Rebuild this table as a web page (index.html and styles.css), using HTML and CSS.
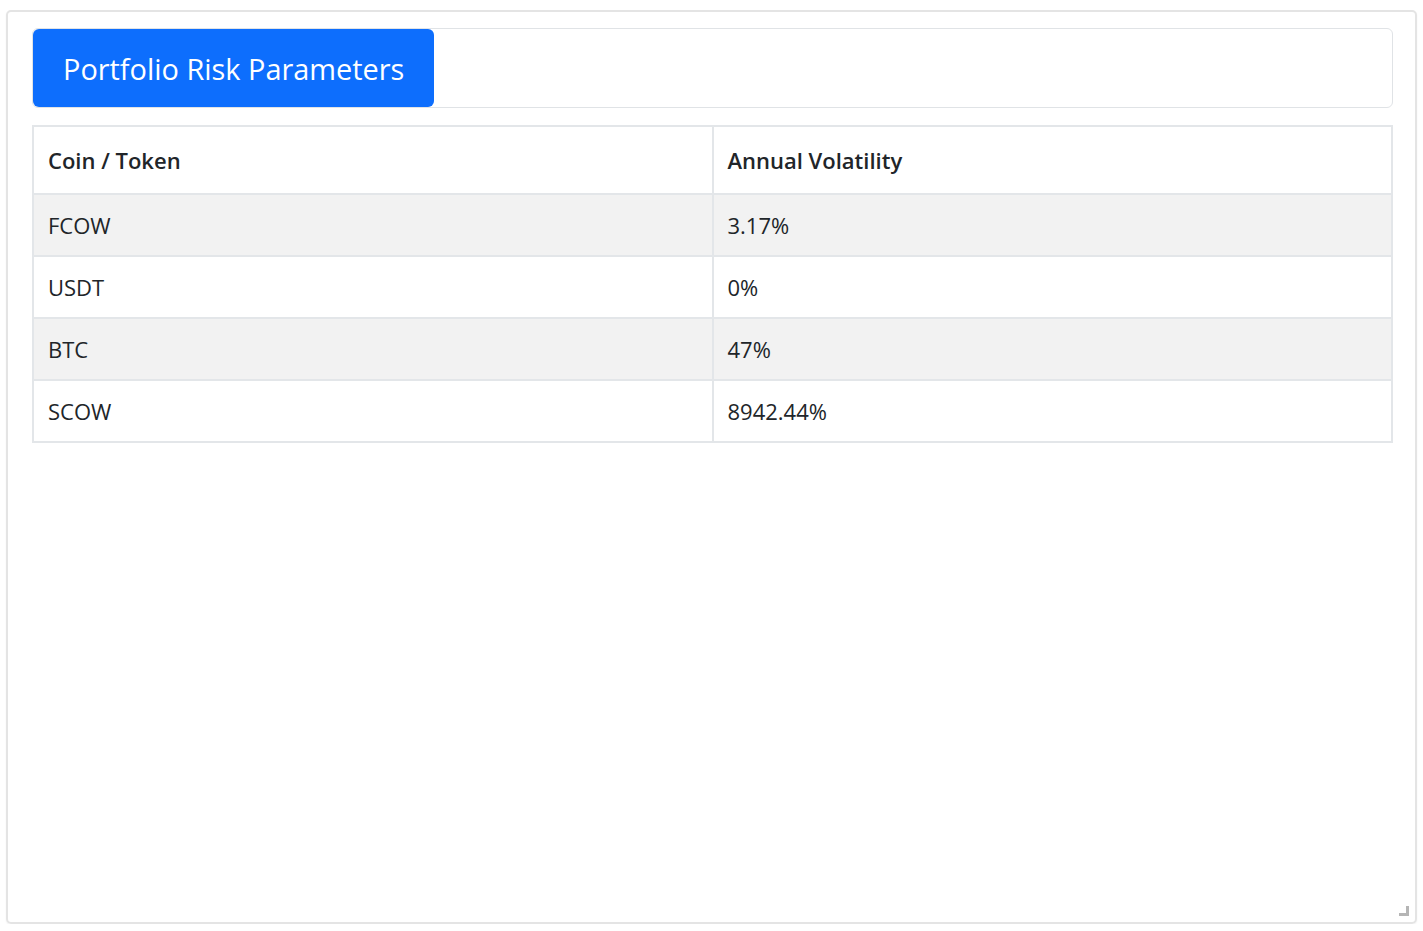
FILE: index.html
```html
<!DOCTYPE html>
<html lang="en">
<head>
<meta charset="utf-8">
<title>Portfolio Risk Parameters</title>
<link rel="stylesheet" href="styles.css">
</head>
<body>
<div class="panel">
  <div class="header-box">
    <button class="title-btn">Portfolio Risk Parameters</button>
  </div>
  <table class="risk-table">
    <thead>
      <tr><th>Coin / Token</th><th>Annual Volatility</th></tr>
    </thead>
    <tbody>
      <tr class="odd"><td>FCOW</td><td>3.17%</td></tr>
      <tr><td>USDT</td><td>0%</td></tr>
      <tr class="odd"><td>BTC</td><td>47%</td></tr>
      <tr><td>SCOW</td><td>8942.44%</td></tr>
    </tbody>
  </table>
  <span class="grip"></span>
</div>
</body>
</html>
```
FILE: styles.css
```css
html, body {
  margin: 0;
  padding: 0;
  background: #ffffff;
}
body {
  font-family: "Open Sans", "Noto Sans", sans-serif;
  color: #212529;
}
.panel {
  position: relative;
  box-sizing: border-box;
  margin: 10px 0 0 6px;
  width: 1411px;
  height: 914px;
  border: 2px solid #e4e4e4;
  border-radius: 5px;
  padding: 16px 22px 0 24px;
  box-shadow: 0 1px 2px rgba(0,0,0,0.06);
}
.header-box {
  box-sizing: border-box;
  height: 80px;
  border: 1px solid #e0e3e6;
  border-radius: 6px;
  display: flex;
  align-items: stretch;
}
.title-btn {
  width: 401px;
  border: none;
  border-radius: 6px;
  background: #0d6efd;
  color: #ffffff;
  font-family: "Open Sans", "Noto Sans", sans-serif;
  font-size: 28.9px;
  text-align: left;
  padding: 0 0 0 30px;
  cursor: pointer;
}
.risk-table {
  margin-top: 17px;
  width: 1361px;
  border-collapse: collapse;
  font-size: 22px;
  table-layout: fixed;
}
.risk-table th,
.risk-table td {
  border: 2px solid #e3e6e9;
  text-align: left;
  padding: 0 0 0 14px;
}
.risk-table th {
  height: 66px;
  font-weight: 600;
  font-size: 22px;
}
.risk-table td {
  height: 60px;
  font-weight: 400;
}
.risk-table tr.odd td {
  background: #f2f2f2;
}
.grip {
  position: absolute;
  right: 6px;
  bottom: 6px;
  width: 7px;
  height: 7px;
  border-right: 3px solid #b5b5b5;
  border-bottom: 3px solid #b5b5b5;
}
```
